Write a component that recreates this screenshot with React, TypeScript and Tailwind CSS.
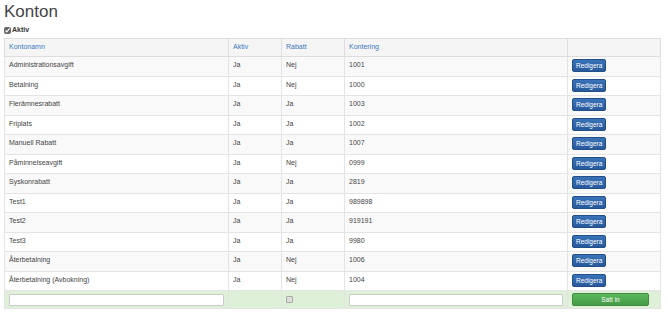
import { useState } from 'react';

interface Konto {
    namn: string;
    aktiv: string;
    rabatt: string;
    kontering: string;
}

const konton: Konto[] = [
    { namn: 'Administrationsavgift', aktiv: 'Ja', rabatt: 'Nej', kontering: '1001' },
    { namn: 'Betalning', aktiv: 'Ja', rabatt: 'Nej', kontering: '1000' },
    { namn: 'Flerämnesrabatt', aktiv: 'Ja', rabatt: 'Ja', kontering: '1003' },
    { namn: 'Friplats', aktiv: 'Ja', rabatt: 'Ja', kontering: '1002' },
    { namn: 'Manuell Rabatt', aktiv: 'Ja', rabatt: 'Ja', kontering: '1007' },
    { namn: 'Påminnelseavgift', aktiv: 'Ja', rabatt: 'Nej', kontering: '0999' },
    { namn: 'Syskonrabatt', aktiv: 'Ja', rabatt: 'Ja', kontering: '2819' },
    { namn: 'Test1', aktiv: 'Ja', rabatt: 'Ja', kontering: '989898' },
    { namn: 'Test2', aktiv: 'Ja', rabatt: 'Ja', kontering: '919191' },
    { namn: 'Test3', aktiv: 'Ja', rabatt: 'Ja', kontering: '9980' },
    { namn: 'Återbetalning', aktiv: 'Ja', rabatt: 'Nej', kontering: '1006' },
    { namn: 'Återbetalning (Avbokning)', aktiv: 'Ja', rabatt: 'Nej', kontering: '1004' },
];

export default function App() {
    const [aktiv, setAktiv] = useState(true);

    return (
        <div className="h-[316px] w-[668px] overflow-hidden bg-white px-[4px] pt-[2px] font-['Liberation_Sans',Arial,sans-serif] text-[#444]">
            <h1 className="text-[17px] leading-[20px] text-[#444]">Konton</h1>

            <label className="mt-[3px] flex items-center gap-[1px] text-[7px] font-bold leading-[10px] text-[#333]">
                <input
                    type="checkbox"
                    checked={aktiv}
                    onChange={() => setAktiv(!aktiv)}
                    className="m-0 h-[7px] w-[7px] accent-[#666]"
                />
                Aktiv
            </label>

            <table className="mt-[3px] w-[656px] table-fixed border-collapse border border-[#ddd] text-[7px]">
                <colgroup>
                    <col className="w-[224px]" />
                    <col className="w-[53px]" />
                    <col className="w-[63px]" />
                    <col className="w-[223px]" />
                    <col className="w-[93px]" />
                </colgroup>
                <thead>
                    <tr className="h-[18px] bg-[#f5f5f5]">
                        {['Kontonamn', 'Aktiv', 'Rabatt', 'Kontering', ''].map((h, i) => (
                            <th key={i} className="border border-[#ddd] px-[4px] text-left font-normal text-[#3a78c0]">
                                {h}
                            </th>
                        ))}
                    </tr>
                </thead>
                <tbody>
                    {konton.map((k, i) => (
                        <tr key={k.namn} className={i % 2 === 0 ? 'h-[19.5px] bg-[#f9f9f9]' : 'h-[19.5px] bg-white'}>
                            <td className="border border-[#e4e4e4] px-[4px] pt-[3px] align-top">{k.namn}</td>
                            <td className="border border-[#e4e4e4] px-[4px] pt-[3px] align-top">{k.aktiv}</td>
                            <td className="border border-[#e4e4e4] px-[4px] pt-[3px] align-top">{k.rabatt}</td>
                            <td className="border border-[#e4e4e4] px-[4px] pt-[3px] align-top">{k.kontering}</td>
                            <td className="border border-[#e4e4e4] px-[4px] pt-[2px] align-top">
                                <button className="h-[13px] rounded-[2px] border border-[#24508a] bg-gradient-to-b from-[#3a73b8] to-[#275a9c] px-[3px] text-[6.5px] leading-[11px] text-white">
                                    Redigera
                                </button>
                            </td>
                        </tr>
                    ))}
                    <tr className="h-[18px] bg-[#dff0d8]">
                        <td className="border border-[#e4e4e4] px-[4px]">
                            <input className="block h-[12px] w-full rounded-[1px] border border-[#ccc] bg-white" />
                        </td>
                        <td className="border border-[#e4e4e4] px-[4px]"></td>
                        <td className="border border-[#e4e4e4] px-[4px]">
                            <input
                                type="checkbox"
                                className="m-0 block h-[7px] w-[7px] appearance-none rounded-[1px] border border-[#aaa] bg-[#ddd]"
                            />
                        </td>
                        <td className="border border-[#e4e4e4] px-[4px]">
                            <input className="block h-[12px] w-full rounded-[1px] border border-[#ccc] bg-white" />
                        </td>
                        <td className="border border-[#e4e4e4] px-[4px]">
                            <button className="block h-[13px] w-[77px] rounded-[2px] border border-[#3f8e3f] bg-gradient-to-b from-[#5cb85c] to-[#469a46] text-[6.5px] leading-[11px] text-white">
                                Satt in
                            </button>
                        </td>
                    </tr>
                </tbody>
            </table>
        </div>
    );
}
